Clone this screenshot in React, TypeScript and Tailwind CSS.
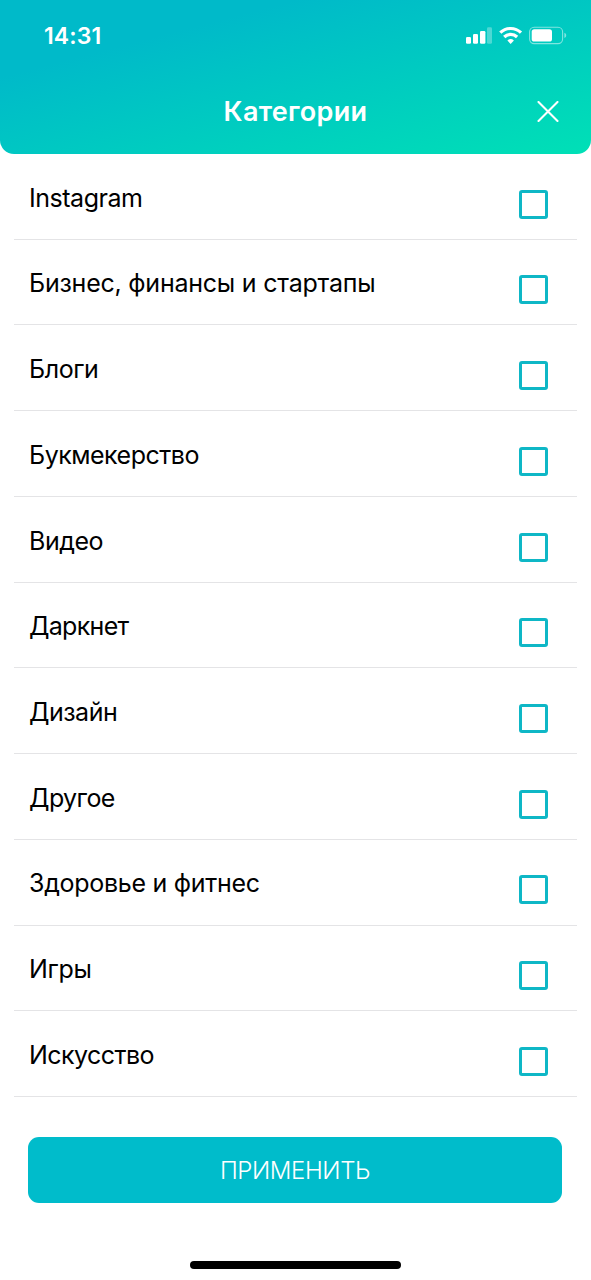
const categories: { name: string; spacing: string }[] = [
  { name: "Instagram", spacing: "tracking-[-0.47px]" },
  { name: "Бизнес, финансы и стартапы", spacing: "tracking-[-0.23px]" },
  { name: "Блоги", spacing: "tracking-[-0.45px]" },
  { name: "Букмекерство", spacing: "tracking-[-0.5px]" },
  { name: "Видео", spacing: "tracking-[-0.45px]" },
  { name: "Даркнет", spacing: "tracking-[-0.7px]" },
  { name: "Дизайн", spacing: "tracking-[-0.5px]" },
  { name: "Другое", spacing: "tracking-[-0.6px]" },
  { name: "Здоровье и фитнес", spacing: "tracking-[-0.29px]" },
  { name: "Игры", spacing: "tracking-[-0.35px]" },
  { name: "Искусство", spacing: "tracking-[-0.55px]" },
];

function StatusIcons() {
  return (
    <svg className="mb-px" width="102" height="20" viewBox="465 25 102 20" fill="white">
      <rect x="466" y="37" width="5" height="6.7" rx="1.3" />
      <rect x="473" y="34" width="5" height="9.7" rx="1.3" />
      <rect x="480" y="31" width="5.4" height="12.7" rx="1.3" />
      <rect x="487" y="27.3" width="5" height="16.4" rx="1.3" opacity="0.3" />
      <g fill="none" stroke="white" strokeWidth="3.2">
        <path d="M500.3 32.7a14.8 14.8 0 0 1 20.7 0" />
        <path d="M504.2 37a9.2 9.2 0 0 1 12.9 0" />
      </g>
      <path d="M507.4 40.5a4.8 4.8 0 0 1 6.5 0l-3.25 3.5z" />
      <rect x="529.6" y="27.2" width="33" height="16.4" rx="4.6" fill="none" stroke="white" strokeOpacity="0.5" strokeWidth="1.1" />
      <rect x="531.7" y="29.2" width="20.3" height="12.4" rx="2.6" />
      <path d="M564.4 32.8c2.4.9 2.4 4.3 0 5.2z" opacity="0.5" />
    </svg>
  );
}

export default function App() {
  return (
    <div className="flex h-[1280px] w-[591px] flex-col overflow-hidden bg-white font-['Inter','Liberation_Sans',sans-serif] text-black">
      <header className="h-[154px] shrink-0 rounded-b-[14px] bg-[linear-gradient(to_bottom_right,#00bac9_0%,#00bac9_25%,#00e0b6_100%)] text-white">
        <div className="flex h-[71px] items-center justify-between pr-6 pl-11">
          <span className="pt-px text-[23px] leading-7 font-semibold tracking-[0.1px]">14:31</span>
          <StatusIcons />
        </div>
        <div className="grid h-[82px] grid-cols-[80px_1fr_80px] items-center">
          <h1 className="col-start-2 text-center text-[27px] leading-8 font-semibold tracking-[0.3px]">Категории</h1>
          <button aria-label="Закрыть" className="justify-self-end pr-8">
            <svg width="22" height="22" viewBox="0 0 22 22" stroke="white" strokeWidth="2.1" strokeLinecap="round">
              <path d="M1.5 1l19 19M20.5 1l-19 19" />
            </svg>
          </button>
        </div>
      </header>
      <ul className="mx-3.5 shrink-0">
        {categories.map((c) => (
          <li key={c.name} className="flex h-[85.74px] items-start justify-between border-b border-[#e4e4e6] pr-[29px] pl-[15px]">
            <span className={`pt-[27.6px] text-[25px] leading-8 whitespace-nowrap ${c.spacing}`}>{c.name}</span>
            <span role="checkbox" aria-checked="false" className="mt-[35.6px] size-[29px] rounded-[3px] border-[3px] border-[#0eb7c6]" />
          </li>
        ))}
      </ul>
      <button className="mr-[29px] ml-[28px] mt-[39.8px] h-[66px] shrink-0 rounded-[11px] bg-[#00bccb] pt-[2px] text-[24px] font-light tracking-[-0.4px] text-white">ПРИМЕНИТЬ</button>
      <div className="mx-auto mt-[58px] h-[8px] w-[211px] shrink-0 rounded-full bg-black" />
    </div>
  );
}
